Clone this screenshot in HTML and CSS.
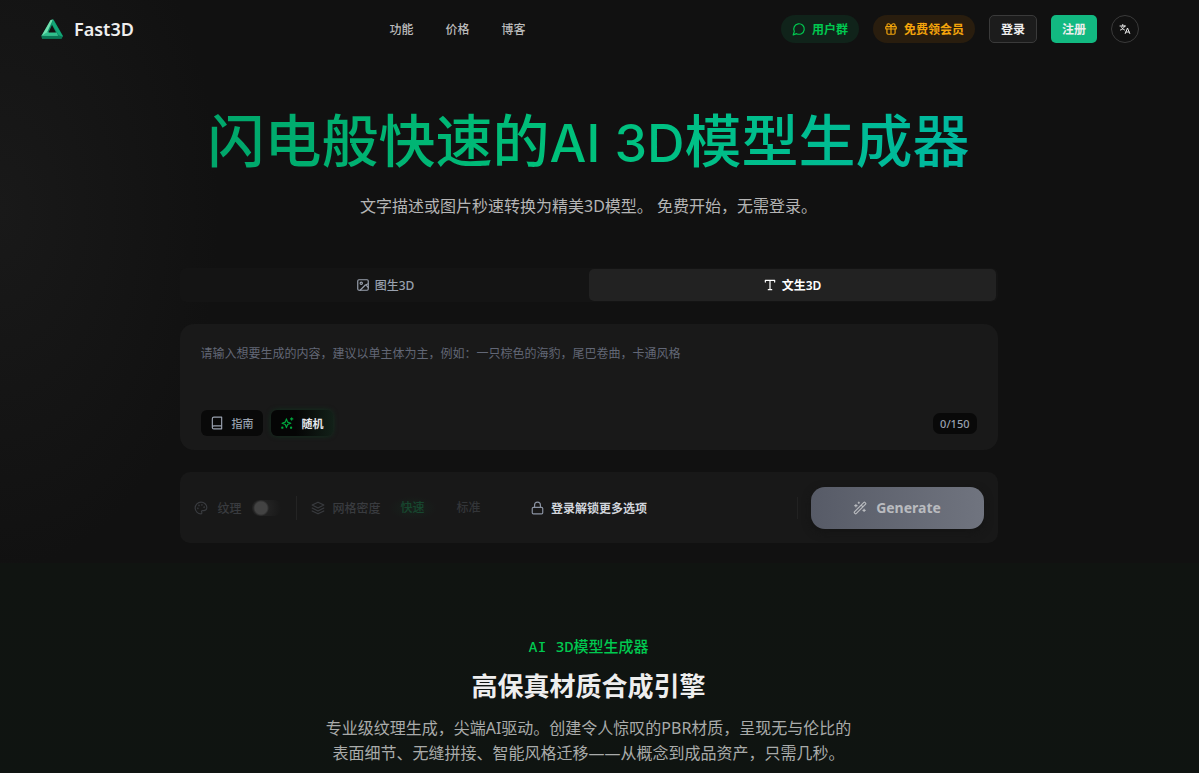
FILE: index.html
```html
<!DOCTYPE html>
<html lang="zh-CN">
<head>
    <meta charset="UTF-8">
    <meta name="viewport" content="width=device-width, initial-scale=1.0">
    <title>Fast3D</title>
    <link rel="stylesheet" href="styles.css">
</head>
<body>
    <header class="header">
        <a class="brand" href="#">
            <svg class="logo" viewBox="0 0 24 22">
                <path d="M11 2 L13.5 1.5 L23 18 L21.5 20.5 L2 20.5 L1.5 17.5 Z" fill="#0f8f68"/>
                <path d="M10.5 2 L13 1.5 L7 14.5 H16 L18 18 H1.5 Z" fill="#6fe0ae"/>
                <path d="M13 1.5 L22.8 18.5 L19.5 18 L12 6 Z" fill="#13a877"/>
                <path d="M1.5 17.5 H19.5 L22.5 18.8 L21.5 20.8 H2 Z" fill="#0a7856"/>
                <path d="M3.5 16.5 L6.5 14.5 H16 L18 17.5 H3 Z" fill="#2fc18d"/>
                <path d="M12 7 L16 14.5 H8.5 Z" fill="#111"/>
            </svg>
            <span>Fast3D</span>
        </a>
        <nav class="nav">
            <a href="#">功能</a>
            <a href="#">价格</a>
            <a href="#">博客</a>
        </nav>
        <div class="actions">
            <a class="pill pill-green" href="#">
                <svg class="icon" viewBox="0 0 24 24"><path d="M7.9 20A9 9 0 1 0 4 16.1L2 22Z"/></svg>
                用户群
            </a>
            <a class="pill pill-amber" href="#">
                <svg class="icon" viewBox="0 0 24 24"><rect x="3" y="8" width="18" height="4" rx="1"/><path d="M12 8v13M19 12v7a2 2 0 0 1-2 2H7a2 2 0 0 1-2-2v-7M7.5 8a2.5 2.5 0 0 1 0-5A4.8 8 0 0 1 12 8a4.8 8 0 0 1 4.500-5 2.500 2.500 0 0 1 0 5"/></svg>
                免费领会员
            </a>
            <button class="btn btn-dark" type="button">登录</button>
            <button class="btn btn-green" type="button">注册</button>
            <button class="lang" type="button" aria-label="语言">
                <svg class="icon" viewBox="0 0 24 24"><path d="M2 6h11M7.500 3v3M11 6c-1 4-4 7-8 8M5 8c1 3 3 5 6 6M12.500 21l4.500-11 4.500 11M14 18h6"/></svg>
            </button>
        </div>
    </header>

    <main>
        <section class="hero">
            <h1>闪电般快速的<span class="latin">AI 3D</span>模型生成器</h1>
            <p class="subtitle">文字描述或图片秒速转换为精美3D模型。 免费开始，无需登录。</p>

            <form class="generator">
                <div class="tabs">
                    <button class="tab" type="button">
                        <svg class="icon" viewBox="0 0 24 24"><rect x="3" y="3" width="18" height="18" rx="2"/><circle cx="9" cy="9" r="2"/><path d="M21 10l-5 2-9 9M21 16l-3-3"/></svg>
                        图生3D
                    </button>
                    <button class="tab active" type="button">
                        <svg class="icon" viewBox="0 0 24 24"><path d="M4 7V4h16v3M9 20h6M12 4v16"/></svg>
                        文生3D
                    </button>
                </div>

                <div class="prompt">
                    <textarea aria-label="提示词" placeholder="请输入想要生成的内容，建议以单主体为主，例如：一只棕色的海豹，尾巴卷曲，卡通风格"></textarea>
                    <div class="prompt-bar">
                        <button class="chip" type="button">
                            <svg class="icon" viewBox="0 0 24 24"><path d="M4 19.500v-15A2.500 2.500 0 0 1 6.500 2H20v20H6.500a2.500 2.500 0 0 1 0-5H20"/></svg>
                            指南
                        </button>
                        <button class="chip chip-random" type="button">
                            <svg class="icon" viewBox="0 0 24 24"><path d="M11 5l2 5.500 5.500 2-5.500 2-2 5.500-2-5.500-5.500-2 5.500-2ZM20 3v4M18 5h4"/><circle cx="4" cy="20" r="1"/><circle cx="19" cy="20" r="1"/></svg>
                            随机
                        </button>
                        <span class="counter">0/150</span>
                    </div>
                </div>

                <div class="options">
                    <div class="locked">
                        <div class="option">
                            <svg class="icon" viewBox="0 0 24 24"><circle cx="13.500" cy="6.500" r=".5"/><circle cx="17.500" cy="10.500" r=".5"/><circle cx="8.500" cy="7.500" r=".5"/><circle cx="6.500" cy="12.500" r=".5"/><path d="M12 2C6.500 2 2 6.500 2 12s4.500 10 10 10c.9 0 1.600-.7 1.600-1.700 0-.4-.2-.8-.4-1.100-.3-.3-.4-.7-.4-1.100a1.600 1.600 0 0 1 1.700-1.700h2c3 0 5.500-2.500 5.500-5.500C22 6 17.500 2 12 2Z"/></svg>
                            <label for="texture">纹理</label>
                            <input class="switch" type="checkbox" id="texture" disabled>
                        </div>
                        <div class="option density">
                            <svg class="icon" viewBox="0 0 24 24"><path d="M12 2 22 7 12 12 2 7ZM2 12l10 5 10-5M2 17l10 5 10-5"/></svg>
                            <span>网格密度</span>
                            <button class="level level-on" type="button" disabled>快速</button>
                            <button class="level" type="button" disabled>标准</button>
                        </div>
                    </div>
                    <a class="unlock" href="#">
                        <svg class="icon" viewBox="0 0 24 24"><rect x="3" y="11" width="18" height="11" rx="2"/><path d="M7 11V7a5 5 0 0 1 10 0v4"/></svg>
                        登录解锁更多选项
                    </a>
                    <div class="submit">
                        <button class="generate" type="button">
                            <svg class="icon" viewBox="0 0 24 24"><path d="M21.600 3.600l-1.200-1.200a1.200 1.200 0 0 0-1.700 0L2.400 18.600a1.200 1.200 0 0 0 0 1.700l1.300 1.300a1.200 1.200 0 0 0 1.700 0L21.600 5.400a1.200 1.200 0 0 0 0-1.800ZM14 7l3 3M5 6v4M3 8h4M19 14v4M17 16h4M10 2v2M9 3h2"/></svg>
                            Generate
                        </button>
                    </div>
                </div>
            </form>
        </section>

        <section class="feature">
            <p class="eyebrow">AI 3D模型生成器</p>
            <h2>高保真材质合成引擎</h2>
            <p class="lead">专业级纹理生成，尖端AI驱动。创建令人惊叹的PBR材质，呈现无与伦比的表面细节、无缝拼接、智能风格迁移——从概念到成品资产，只需几秒。</p>
        </section>
    </main>
</body>
</html>
```

FILE: styles.css
```css
* {
    box-sizing: border-box;
}
body {
    margin: 0;
    min-height: 100vh;
    font-family: "Noto Sans", "Noto Sans CJK SC", sans-serif;
    font-size: 12px;
    color: #eee;
    background: radial-gradient(ellipse 220px 360px at 0 210px, #191919, #111);
    overflow: hidden;
}
a {
    color: inherit;
    text-decoration: none;
}
button {
    font: inherit;
    color: inherit;
    border: none;
    background: none;
    padding: 0;
    cursor: pointer;
}
.icon {
    width: 14px;
    height: 14px;
    flex: none;
    fill: none;
    stroke: currentColor;
    stroke-width: 2;
    stroke-linecap: round;
    stroke-linejoin: round;
}

/* Header */
.header {
    display: flex;
    justify-content: space-between;
    align-items: center;
    height: 58px;
    padding: 0 60px 0 40px;
}
.brand {
    display: flex;
    align-items: center;
    gap: 10px;
    font-size: 18px;
    font-weight: 600;
}
.logo {
    width: 24px;
    height: 22px;
}
.nav {
    display: flex;
    gap: 32px;
    font-weight: 500;
    color: #bbb;
}
.actions {
    display: flex;
    align-items: center;
    gap: 14px;
    font-weight: 600;
    white-space: nowrap;
}
.pill {
    display: flex;
    align-items: center;
    gap: 6px;
    height: 28px;
    padding: 0 11px;
    border-radius: 14px;
}
.pill-green {
    color: #00c950;
    background: #10231a;
}
.pill-amber {
    color: #f5a50b;
    background: #291d0e;
}
.btn {
    height: 28px;
    padding: 0 11px;
    border-radius: 5px;
}
.btn-dark {
    background: #1c1c1c;
    border: 1px solid #3a3a3a;
}
.btn-green {
    background: #12b981;
}
.lang {
    display: grid;
    place-items: center;
    width: 28px;
    height: 28px;
    border: 1px solid #3a3a3a;
    border-radius: 50%;
}
.lang .icon {
    width: 12px;
    height: 12px;
}

/* Hero */
.hero {
    padding: 40px 22px 20px 0;
    text-align: center;
}
h1 {
    width: fit-content;
    margin: 0 auto;
    font-size: 57px;
    line-height: 84px;
    font-weight: 500;
    color: transparent;
    background: linear-gradient(90deg, #00a66a, #00c27c 50%, #00b8a0);
    background-clip: text;
    -webkit-background-clip: text;
}
.latin {
    font-family: Inter, "Noto Sans", sans-serif;
    font-size: 52px;
    line-height: 1;
}
.subtitle {
    margin: 10px 0 0;
    font-size: 16px;
    line-height: 28px;
    color: #b5b5b5;
}
.generator {
    max-width: 818px;
    margin: 48px auto 0;
}
.tabs {
    display: grid;
    grid-template-columns: 1fr 1fr;
    padding: 1px 2px;
    border-radius: 6px;
    background: #141414;
}
.tab {
    display: flex;
    justify-content: center;
    align-items: center;
    gap: 5px;
    height: 32px;
    border-radius: 5px;
    font-weight: 500;
    color: #99a1af;
}
.tab.active {
    background: #222;
    color: #fff;
    font-weight: 600;
}
.prompt {
    margin-top: 22px;
    padding: 20px 21px 14px;
    border-radius: 14px;
    background: #191919;
}
.prompt textarea {
    display: block;
    width: 100%;
    height: 66px;
    padding: 0;
    border: none;
    outline: none;
    resize: none;
    background: none;
    color: #eee;
    font: inherit;
    line-height: 20px;
}
.prompt textarea::placeholder {
    color: #626776;
}
.prompt-bar {
    display: flex;
    align-items: center;
    gap: 8px;
}
.chip {
    display: flex;
    align-items: center;
    gap: 8px;
    height: 26px;
    padding: 0 9px;
    border-radius: 6px;
    background: #090909;
    color: #99a1af;
    font-size: 11px;
    font-weight: 500;
}
.chip-random {
    background: linear-gradient(90deg, #050505 40%, #122018);
    box-shadow: 0 0 5px #12321f;
    color: #e5e7eb;
    font-weight: 600;
}
.chip-random .icon {
    color: #00a83e;
}
.counter {
    margin-left: auto;
    padding: 0 7px;
    border-radius: 7px;
    background: #090909;
    color: #99a1af;
    font-size: 11px;
    line-height: 21px;
    font-weight: 500;
}
.options {
    position: relative;
    display: flex;
    justify-content: space-between;
    align-items: center;
    margin-top: 22px;
    padding: 0 14px;
    height: 71px;
    border-radius: 10px;
    background: #181818;
}
.locked {
    display: flex;
    align-items: center;
    gap: 14px;
    color: #393b3f;
    font-weight: 500;
}
.option {
    display: flex;
    align-items: center;
    gap: 10px;
}
.density {
    padding-left: 14px;
    border-left: 1px solid #242424;
    gap: 8px;
}
.switch {
    appearance: none;
    width: 30px;
    height: 16px;
    margin: 0;
    border-radius: 8px;
    background: radial-gradient(circle at 9px 8px, #434343 6px, #222 8px, #181818 20px);
}
.level {
    padding: 0 12px;
    line-height: 24px;
    border-radius: 6px;
    color: #333538;
}
.level-on {
    background: radial-gradient(closest-side, #17221c, #181818);
    color: #17472f;
}
.unlock {
    position: absolute;
    left: 50%;
    top: 50%;
    transform: translate(-50%, -50%);
    display: flex;
    align-items: center;
    gap: 7px;
    font-weight: 600;
    color: #d1d5dc;
}
.unlock .icon {
    color: #8b93a3;
}
.submit {
    padding-left: 14px;
    background: linear-gradient(#222, #222) left center / 1px 22px no-repeat;
}
.generate {
    display: flex;
    justify-content: center;
    align-items: center;
    gap: 9px;
    width: 173px;
    height: 42px;
    border-radius: 14px;
    background: linear-gradient(90deg, #575b67, #70747f);
    color: #b9bbbf;
    font-size: 14px;
    font-weight: 700;
    box-shadow: 0 3px 8px #141414;
}

/* Feature */
.feature {
    padding: 73px 22px 40px 0;
    text-align: center;
    background: linear-gradient(#101411, #0f1411);
}
.eyebrow {
    margin: 0;
    font-family: "Noto Sans Mono", "DejaVu Sans Mono", "Noto Sans CJK SC", monospace;
    font-size: 15px;
    line-height: 20px;
    font-weight: 500;
    color: #00c950;
}
h2 {
    margin: 10px 0 0;
    font-size: 26px;
    line-height: 40px;
    font-weight: 700;
}
.lead {
    max-width: 530px;
    margin: 10px auto 0;
    font-size: 16px;
    line-height: 25px;
    color: #a9abaa;
}
```
